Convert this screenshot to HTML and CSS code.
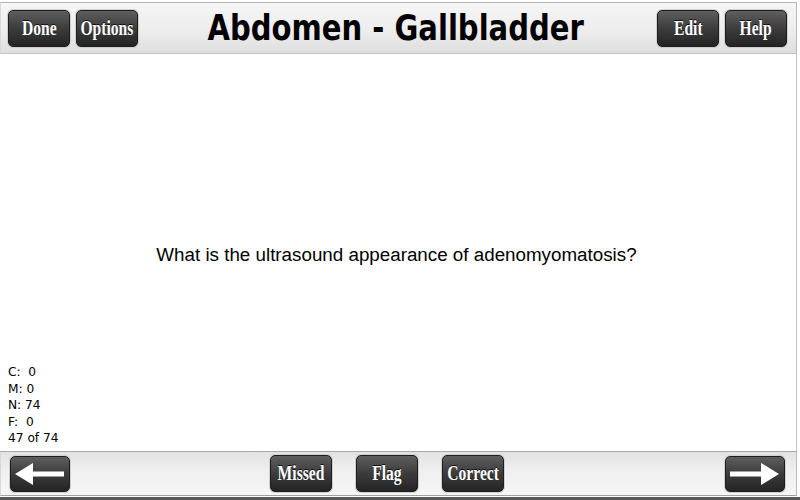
FILE: index.html
```html
<!DOCTYPE html>
<html>
<head>
<meta charset="utf-8">
<link rel="stylesheet" href="styles.css">
</head>
<body>
<div class="page">
  <header class="topbar">
    <div class="group">
      <button class="btn"><span class="lbl">Done</span></button>
      <button class="btn"><span class="lbl">Options</span></button>
    </div>
    <h1 class="title"><span class="title-text">Abdomen - Gallbladder</span></h1>
    <div class="group">
      <button class="btn"><span class="lbl">Edit</span></button>
      <button class="btn"><span class="lbl">Help</span></button>
    </div>
  </header>
  <main class="content">
    <p class="question">What is the ultrasound appearance of adenomyomatosis?</p>
    <div class="stats">
      <div>C:&nbsp; 0</div>
      <div>M: 0</div>
      <div>N: 74</div>
      <div>F:&nbsp; 0</div>
      <div>47 of 74</div>
    </div>
  </main>
  <footer class="bottombar">
    <button class="btn arrow">
      <svg width="50" height="24" viewBox="0 0 50 24"><polygon points="0,12 18,1 18,9.5 49,9.5 49,14.5 18,14.5 18,23" fill="#fff"/></svg>
    </button>
    <div class="group mid">
      <button class="btn"><span class="lbl">Missed</span></button>
      <button class="btn"><span class="lbl">Flag</span></button>
      <button class="btn"><span class="lbl">Correct</span></button>
    </div>
    <button class="btn arrow right">
      <svg width="50" height="24" viewBox="0 0 50 24"><polygon points="49,12 31,1 31,9.5 0,9.5 0,14.5 31,14.5 31,23" fill="#fff"/></svg>
    </button>
  </footer>
  <div class="baseline"></div>
</div>
</body>
</html>
```

FILE: styles.css
```css
html, body {
  margin: 0;
  padding: 0;
  background: #fff;
}
.page {
  width: 800px;
  height: 500px;
  display: flex;
  flex-direction: column;
  box-sizing: border-box;
}
.topbar {
  margin-top: 2px;
  width: 797px;
  height: 52px;
  box-sizing: border-box;
  border-top: 1px solid #b4b4b4;
  border-bottom: 1px solid #c4c4c4;
  border-left: 1px solid #d8d8d8;
  border-right: 1px solid #b9b9b9;
  background: linear-gradient(#f6f6f6, #ececec 60%, #dedede);
  display: grid;
  grid-template-columns: auto 1fr auto;
  align-items: center;
  padding: 0 9px 0 7px;
}
.group {
  display: flex;
  gap: 6px;
}
.btn {
  width: 62px;
  height: 37px;
  margin: 0;
  padding: 0;
  border: 1px solid #1e1e1e;
  border-radius: 5px;
  background: linear-gradient(#5e5e5e, #3c3c3c 50%, #242424);
  box-shadow: 0 0 0 1px #cfcfcf;
  display: flex;
  align-items: center;
  justify-content: center;
  overflow: visible;
}
.lbl {
  display: inline-block;
  font-family: "Liberation Serif", "Times New Roman", serif;
  font-weight: bold;
  font-size: 20px;
  color: #fff;
  transform: scaleX(0.78);
  white-space: nowrap;
  text-shadow: 0 -1px 0 #111;
}
.title {
  margin: 0;
  padding-right: 4px;
  text-align: center;
  font-family: "DejaVu Sans", sans-serif;
  font-weight: bold;
  font-size: 35px;
  color: #000;
  white-space: nowrap;
  line-height: 1;
}
.title-text {
  display: inline-block;
  transform: scaleX(0.83);
}
.content {
  flex: 1;
  width: 797px;
  box-sizing: border-box;
  border-right: 1px solid #c4c4c4;
  display: grid;
}
.question {
  grid-area: 1 / 1;
  margin: 0;
  display: flex;
  align-items: center;
  justify-content: center;
  padding: 4px 3px 0 0;
  font-family: "Liberation Sans", Arial, sans-serif;
  font-size: 18.8px;
  color: #000;
}
.stats {
  grid-area: 1 / 1;
  align-self: end;
  justify-self: start;
  padding: 0 0 4px 8px;
  font-family: "DejaVu Sans", sans-serif;
  font-size: 12.2px;
  line-height: 16.6px;
  color: #000;
}
.bottombar {
  width: 797px;
  height: 45px;
  box-sizing: border-box;
  border-top: 1px solid #a8a8a8;
  border-bottom: 1px solid #a0a0a0;
  border-left: 1px solid #d8d8d8;
  border-right: 1px solid #b9b9b9;
  background: linear-gradient(#e2e2e2, #efefef 40%, #f6f6f6);
  display: flex;
  align-items: center;
  padding: 0 11px 0 9px;
  margin-bottom: 1px;
}
.baseline {
  height: 3px;
  background: #5a5a5a;
}
.arrow {
  width: 60px;
  height: 36px;
}
.mid {
  margin-left: 200px;
  gap: 24px;
}
.right {
  margin-left: auto;
}
```
